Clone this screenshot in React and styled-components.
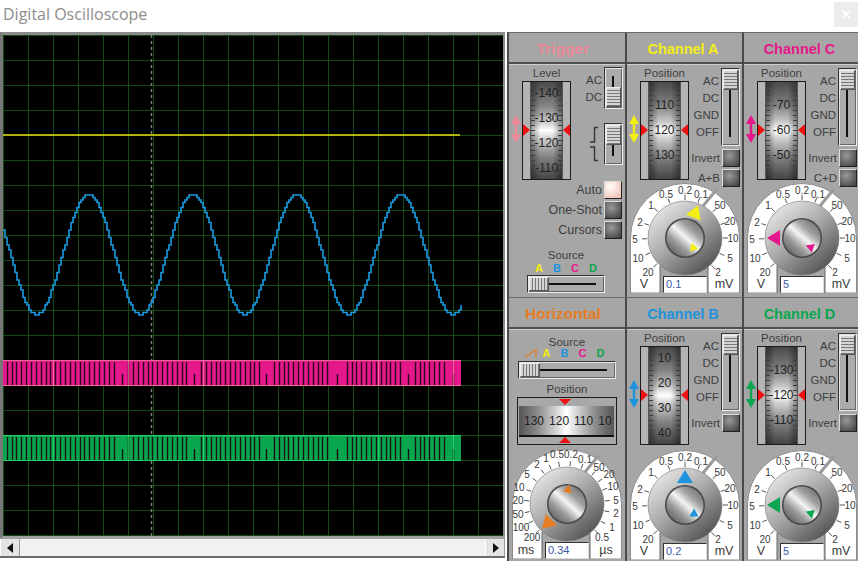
import React from 'react'
import styled, { createGlobalStyle } from 'styled-components'

const GlobalStyle = createGlobalStyle`
  html, body { margin: 0; padding: 0; background: #fff; overflow: hidden; }
  body { font-family: "Liberation Sans", Arial, sans-serif; }
`

const Colors = { A: '#f4ee14', B: '#1c93dc', C: '#e6178a', D: '#0aa650', H: '#e67d22', T: '#ec8a9c' }

const channelScale = [
  ['20', -37, 34], ['10', -47, 20], ['5', -50, 1], ['2', -45, -16], ['1', -34, -33],
  ['0.5', -19, -44], ['0.2', 0, -48], ['0.1', 16, -44], ['50', 35, -33], ['20', 45, -17],
  ['10', 48, 0], ['5', 45, 20], ['2', 33, 34],
]

const timeScale = [
  ['200', -35, 33], ['100', -46, 23], ['50', -49, 10], ['20', -49, -4], ['10', -48, -17],
  ['5', -40, -30], ['2', -30, -40], ['1', -21, -46], ['0.5', -10, -50], ['0.2', 4, -50],
  ['0.1', 18, -45], ['50', 32, -37], ['20', 42, -30], ['10', 46, -18], ['5', 49, -4],
  ['2', 49, 9], ['1', 45, 23], ['0.5', 35, 33],
]

const channels = {
  A: { title: 'Channel A', drum: ['110', '120', '130'], value: '0.1', angle: 22, fine: [8, 9, -20], slider: 0, buttons: ['Invert', 'A+B'] },
  C: { title: 'Channel C', drum: ['-70', '-60', '-50'], value: '5', angle: -90, fine: [8, 9, -70], slider: 0, buttons: ['Invert', 'C+D'] },
  B: { title: 'Channel B', drum: ['10', '20', '30', '40'], value: '0.2', angle: 0, fine: [9, 8, 0], slider: 0, buttons: ['Invert'] },
  D: { title: 'Channel D', drum: ['-130', '-120', '-110'], value: '5', angle: -90, fine: [8, 8, -70], slider: 0, buttons: ['Invert'] },
}

// stepped sine like the sampled trace on the real scope
function sinePath() {
  let d = ''
  let prev = null
  for (let x = 3; x <= 461; x += 2) {
    const raw = 254.5 - 59.5 * Math.cos((2 * Math.PI * (x - 88)) / 104)
    const y = Math.round(raw / 2.5) * 2.5
    if (prev === null) d += `M${x} ${y}`
    else d += `H${x}V${y}`
    prev = y
  }
  return d
}

const notches = [122, 194, 265.5, 337, 408, 453]
const steps = [4.5, 4.5, 5, 4.5, 5.5, 5, 5]

function stripes(top, bottom) {
  let d = ''
  let i = 0
  for (let x = 7; x < 459; x += steps[i++ % steps.length]) {
    const px = Math.round(x) + 0.5
    if (notches.some((n) => Math.abs(n - px) < 6)) continue
    d += `M${px} ${top}V${bottom}`
  }
  notches.forEach((n) => {
    d += `M${Math.round(n) + 0.5} ${top + 12}V${bottom}`
  })
  return d
}

function Band({ y, fill, edge }) {
  return (
    <g>
      <rect x="3" y={y} width="458" height="26" fill={fill} />
      <path d={stripes(y + 2, y + 25)} stroke="#16060e" strokeOpacity="0.9" strokeWidth="1.4" fill="none" />
      <path d={`M3 ${y + 0.5}H461M3 ${y + 25.5}H461M53.5 ${y}V${y + 26}M128.5 ${y}V${y + 26}M203.5 ${y}V${y + 26}M378.5 ${y}V${y + 26}M453.5 ${y}V${y + 26}`} stroke={edge} strokeOpacity="0.7" fill="none" />
    </g>
  )
}

function DualArrow({ color }) {
  return (
    <ArrowIcon viewBox="0 0 10 28">
      <path d="M5 0L10 9H6.2V19H10L5 28L0 19H3.8V9H0Z" fill={color} />
    </ArrowIcon>
  )
}

function Drum({ labels }) {
  return (
    <DrumFrame>
      <DrumFace>
        {labels.map((l) => (
          <DrumLabel key={l}>{l}</DrumLabel>
        ))}
      </DrumFace>
      <RedMark $side="left" />
      <RedMark $side="right" />
    </DrumFrame>
  )
}

function Slider({ vertical, length, at }) {
  return (
    <SliderBox $vertical={vertical} $length={length}>
      <SliderGroove $vertical={vertical} />
      <SliderThumb $vertical={vertical} $end={at} />
    </SliderBox>
  )
}

function ButtonRow({ label, on, large }) {
  return (
    <ButtonLine>
      <SmallLabel $large={large}>{label}</SmallLabel>
      <PushButton $on={on} />
    </ButtonLine>
  )
}

function SourceLetters() {
  return (
    <>
      <Letter $color={Colors.A}>A</Letter>
      <Letter $color={Colors.B}>B</Letter>
      <Letter $color={Colors.C}>C</Letter>
      <Letter $color={Colors.D}>D</Letter>
    </>
  )
}

function Dial({ scale, color, angle, fine, value, left, right }) {
  return (
    <DialBox>
      <svg width="110" height="110" viewBox="0 0 110 110">
        <defs>
          <linearGradient id="knobOuter" x1="0.15" y1="0.1" x2="0.85" y2="0.95">
            <stop offset="0" stopColor="#e4e4e4" />
            <stop offset="0.45" stopColor="#a8a8a8" />
            <stop offset="1" stopColor="#4e4e4e" />
          </linearGradient>
          <linearGradient id="knobInner" x1="0.1" y1="0.95" x2="0.9" y2="0.05">
            <stop offset="0" stopColor="#5a5a5a" />
            <stop offset="0.3" stopColor="#9c9c9c" />
            <stop offset="0.52" stopColor="#f4f4f4" />
            <stop offset="0.72" stopColor="#a2a2a2" />
            <stop offset="1" stopColor="#6c6c6c" />
          </linearGradient>
        </defs>
        <path d="M.5 110V55A54.5 54.5 0 0 1 109.5 55V110Z" fill="#fff" stroke="#8a8a8a" />
        <rect x="30" y="72" width="48" height="38" fill="#a6a6a6" />
        <path d="M30 110V83M78 110V83" stroke="#666" />
        <path d="M73 23L87 6" stroke="#9a9a9a" strokeWidth="3" />
        {scale.map(([text, dx, dy], i) => {
          const r = Math.hypot(dx, dy)
          const ux = dx / r
          const uy = dy / r
          return (
            <g key={i}>
              <line x1={55 + ux * 38} y1={55 + uy * 38} x2={55 + ux * 43} y2={55 + uy * 43} stroke="#555" />
              <text x={55 + dx} y={55 + dy + 3.5} textAnchor="middle" fontSize="10" fill="#3a3a3a">{text}</text>
            </g>
          )
        })}
        <circle cx="55" cy="55" r="37" fill="url(#knobOuter)" stroke="#777" strokeWidth="0.6" />
        <circle cx="55" cy="55" r="20" fill="#4a4a4a" />
        <circle cx="55" cy="55" r="18.5" fill="url(#knobInner)" />
        <path d="M0 -35L8 -22L-8 -22Z" fill={color} transform={`translate(55 55) rotate(${angle})`} />
        <path d="M0 -4.5L4.5 3.5L-4.5 3.5Z" fill={color} transform={`translate(${55 + fine[0]} ${55 + fine[1]}) rotate(${fine[2]})`} />
        <text x="14" y="105" textAnchor="middle" fontSize="12.5" fill="#3a3a3a">{left}</text>
        <text x="94" y="105" textAnchor="middle" fontSize="12.5" fill="#3a3a3a">{right}</text>
      </svg>
      <ValueBox>{value}</ValueBox>
    </DialBox>
  )
}

function ChannelPanel({ id, lower }) {
  const ch = channels[id]
  return (
    <Panel>
      <PanelHeader $color={Colors[id]} $inset={3}>{ch.title}</PanelHeader>
      <PanelBody>
        <TopRow $height={lower ? 120 : 118}>
          <ArrowSlot><DualArrow color={Colors[id]} /></ArrowSlot>
          <DrumColumn>
            <SmallLabel>Position</SmallLabel>
            <Drum labels={ch.drum} />
          </DrumColumn>
          <ControlColumn>
            <CouplingRow>
              <CouplingLabels>
                <SmallLabel>AC</SmallLabel>
                <SmallLabel>DC</SmallLabel>
                <SmallLabel>GND</SmallLabel>
                <SmallLabel>OFF</SmallLabel>
              </CouplingLabels>
              <Slider vertical length={78} at={ch.slider} />
            </CouplingRow>
            <ButtonStack>
              {ch.buttons.map((b) => (
                <ButtonRow key={b} label={b} />
              ))}
            </ButtonStack>
          </ControlColumn>
        </TopRow>
        <Dial scale={channelScale} color={Colors[id]} angle={ch.angle} fine={ch.fine} value={ch.value} left="V" right="mV" />
      </PanelBody>
    </Panel>
  )
}

function TriggerPanel() {
  return (
    <Panel>
      <PanelHeader $color={Colors.T} $inset={8} $size={15.5}>Trigger</PanelHeader>
      <PanelBody>
        <TopRow $height={116}>
          <ArrowSlot><DualArrow color={Colors.T} /></ArrowSlot>
          <DrumColumn>
            <SmallLabel>Level</SmallLabel>
            <Drum labels={['-140', '-130', '-120', '-110']} />
          </DrumColumn>
          <TriggerControls>
            <SwitchRow>
              <CouplingLabels>
                <SmallLabel>AC</SmallLabel>
                <SmallLabel>DC</SmallLabel>
              </CouplingLabels>
              <Slider vertical length={42} at={1} />
            </SwitchRow>
            <SwitchRow>
              <EdgeIcon viewBox="0 0 12 36">
                <path d="M10 1.5H6.5V16H2M2 21H6.5V34.5H10" fill="none" stroke="#333" strokeWidth="1.4" />
              </EdgeIcon>
              <Slider vertical length={42} at={0} />
            </SwitchRow>
          </TriggerControls>
        </TopRow>
        <TriggerButtons>
          <ButtonRow label="Auto" on large />
          <ButtonRow label="One-Shot" large />
          <ButtonRow label="Cursors" large />
        </TriggerButtons>
        <SourceBlock>
          <SmallLabel>Source</SmallLabel>
          <LetterRow><SourceLetters /></LetterRow>
          <Slider length={78} at={0} />
        </SourceBlock>
      </PanelBody>
    </Panel>
  )
}

function HorizontalPanel() {
  return (
    <Panel>
      <PanelHeader $color={Colors.H} $inset={8} $size={15.5}>Horizontal</PanelHeader>
      <HorizontalBody>
        <SmallLabel>Source</SmallLabel>
        <HorizontalLetters>
          <svg width="13" height="10" viewBox="0 0 13 10">
            <path d="M0 9.5L11 1.5V9" fill="none" stroke={Colors.H} strokeWidth="1.2" />
          </svg>
          <SourceLetters />
        </HorizontalLetters>
        <Slider length={98} at={0} />
        <PositionLabel>Position</PositionLabel>
        <WideFrame>
          <WideFace>
            <WideLabel>130</WideLabel>
            <WideLabel>120</WideLabel>
            <WideLabel>110</WideLabel>
            <WideLabel>10</WideLabel>
          </WideFace>
          <RedMark $side="top" />
          <RedMark $side="bottom" />
        </WideFrame>
        <DialRow>
          <Dial scale={timeScale} color={Colors.H} angle={-135} fine={[1, -15, 10]} value="0.34" left="ms" right="µs" />
        </DialRow>
      </HorizontalBody>
    </Panel>
  )
}

export default function App() {
  return (
    <>
      <GlobalStyle />
      <Window>
        <TitleBar>
          <Title>Digital Oscilloscope</Title>
          <CloseButton>×</CloseButton>
        </TitleBar>
        <Main>
          <ScopeColumn>
            <Screen>
              <Traces viewBox="3 35 500 501">
                <path d="M151.5 35V536" stroke="#808080" strokeWidth="1.4" strokeDasharray="3 3" />
                <path d="M3 135H460" stroke="#e4dc10" strokeWidth="1.6" />
                <path d={sinePath()} stroke="#1a9ce0" strokeWidth="1.6" fill="none" />
                <Band y={360} fill="#e4188a" edge="#f08aa0" />
                <Band y={435} fill="#08a64e" edge="#30e070" />
              </Traces>
            </Screen>
            <ScrollBar>
              <ScrollButton>
                <svg width="7" height="10" viewBox="0 0 7 10"><path d="M6 0V10L0 5Z" fill="#111" /></svg>
              </ScrollButton>
              <ScrollTrack />
              <ScrollButton>
                <svg width="7" height="10" viewBox="0 0 7 10"><path d="M1 0V10L7 5Z" fill="#111" /></svg>
              </ScrollButton>
            </ScrollBar>
          </ScopeColumn>
          <PanelGrid>
            <TriggerPanel />
            <ChannelPanel id="A" />
            <ChannelPanel id="C" />
            <HorizontalPanel />
            <ChannelPanel id="B" lower />
            <ChannelPanel id="D" lower />
          </PanelGrid>
        </Main>
      </Window>
    </>
  )
}

const Window = styled.div`
  width: 858px;
  height: 561px;
  display: flex;
  flex-direction: column;
  background: #fff;
  overflow: hidden;
`

const TitleBar = styled.div`
  height: 32px;
  flex: none;
  display: flex;
  align-items: flex-start;
  justify-content: space-between;
`

const Title = styled.div`
  font-family: "Open Sans", "Noto Sans", sans-serif;
  font-size: 16px;
  line-height: 29px;
  padding-left: 3px;
  color: #8d8d8d;
`

const CloseButton = styled.div`
  width: 24px;
  height: 25px;
  margin-top: 2px;
  background: #ececec;
  color: #fff;
  font-size: 20px;
  line-height: 25px;
  text-align: center;
`

const Main = styled.div`
  flex: 1;
  display: flex;
  min-height: 0;
`

const ScopeColumn = styled.div`
  width: 507px;
  flex: none;
  display: flex;
  flex-direction: column;
  box-sizing: border-box;
  padding-right: 2px;
`

const Screen = styled.div`
  position: relative;
  width: 500px;
  height: 501px;
  border-top: 3px solid #8a8a8a;
  border-left: 3px solid #777;
  border-right: 2px solid #8c8c8c;
  border-bottom: 3px solid #a0a0a0;
  background-color: #000;
  background-image:
    linear-gradient(to right, transparent 24px, #124a12 24px),
    linear-gradient(to bottom, transparent 24px, #124a12 24px);
  background-size: 25px 25px;
  background-position: 1px 1px;
`

const Traces = styled.svg`
  position: absolute;
  inset: 0;
  width: 500px;
  height: 501px;
`

const ScrollBar = styled.div`
  height: 17px;
  display: flex;
  background: #eee;
  border-bottom: 2px solid #6c6c6c;
`

const ScrollButton = styled.div`
  width: 20px;
  flex: none;
  display: flex;
  align-items: center;
  justify-content: center;
  background: #e4e4e4;
  border-left: 1px solid #fff;
  border-right: 1px solid #999;
  box-sizing: border-box;
`

const ScrollTrack = styled.div`
  flex: 1;
  background: #f1f1f1;
`

const PanelGrid = styled.div`
  flex: 1;
  display: grid;
  grid-template-columns: 118px 117px 116px;
  grid-template-rows: 265px 264px;
  background: #a6a6a6;
`

const Panel = styled.div`
  display: flex;
  flex-direction: column;
  border-left: 2px solid #4a4a4a;
  border-top: 1px solid #6a6a6a;
  min-width: 0;
`

const PanelHeader = styled.div`
  height: 31px;
  flex: none;
  display: flex;
  align-items: center;
  justify-content: center;
  box-sizing: border-box;
  padding: 2px ${(p) => p.$inset}px 0 0;
  border-bottom: 2px solid #4e4e4e;
  font-size: ${(p) => p.$size || 14.5}px;
  font-weight: bold;
  color: ${(p) => p.$color};
`

const PanelBody = styled.div`
  flex: 1;
  display: flex;
  flex-direction: column;
  position: relative;
  border-top: 1px solid #cfcfcf;
`

const HorizontalBody = styled(PanelBody)`
  align-items: center;
  padding-top: 5px;
`

const TopRow = styled.div`
  height: ${(p) => p.$height}px;
  flex: none;
  display: flex;
`

const ArrowSlot = styled.div`
  width: 13px;
  flex: none;
  padding-left: 2px;
  box-sizing: border-box;
  padding-top: 50px;
`

const ArrowIcon = styled.svg`
  display: block;
  width: 10px;
  height: 28px;
`

const DrumColumn = styled.div`
  width: 49px;
  flex: none;
  display: flex;
  flex-direction: column;
  align-items: center;
  padding-top: 1px;
`

const SmallLabel = styled.div`
  font-size: ${(p) => (p.$large ? 12.5 : 11.5)}px;
  line-height: 14px;
  color: #3e3e3e;
  white-space: nowrap;
`

const PositionLabel = styled(SmallLabel)`
  margin-top: 3px;
`

const DrumFrame = styled.div`
  position: relative;
  width: 49px;
  height: 99px;
  margin-top: 1px;
  flex: none;
  box-sizing: border-box;
  border: 1.5px solid #1c1c1c;
  background: #b4b4b4;
  display: flex;
  justify-content: center;
`

const DrumFace = styled.div`
  position: relative;
  width: 31px;
  display: flex;
  flex-direction: column;
  justify-content: center;
  align-items: center;
  background:
    linear-gradient(to right, rgba(0, 0, 0, 0.38), transparent 30%, transparent 70%, rgba(0, 0, 0, 0.38)),
    linear-gradient(to bottom, #4a4a4a 0%, #858585 25%, #c4c4c4 40%, #fff 50%, #d0d0d0 58%, #808080 78%, #454545 100%);
  border-left: 1px solid #555;
  border-right: 1px solid #555;

  &::before, &::after {
    content: '';
    position: absolute;
    top: 3px;
    bottom: 3px;
    width: 4px;
    background: repeating-linear-gradient(to bottom, #3c3c3c 0 1px, transparent 1px 5px);
  }
  &::before { left: 0; }
  &::after { right: 0; }
`

const DrumLabel = styled.div`
  font-size: 12px;
  line-height: 25px;
  color: #222;
`

const RedMark = styled.div`
  position: absolute;
  width: 0;
  height: 0;
  ${(p) => p.$side === 'left' && 'left: 0; top: 42px; border-left: 7px solid #ee1111; border-top: 6px solid transparent; border-bottom: 6px solid transparent;'}
  ${(p) => p.$side === 'right' && 'right: 0; top: 42px; border-right: 7px solid #ee1111; border-top: 6px solid transparent; border-bottom: 6px solid transparent;'}
  ${(p) => p.$side === 'top' && 'left: 41px; top: 1px; border-top: 6px solid #ee1111; border-left: 6px solid transparent; border-right: 6px solid transparent;'}
  ${(p) => p.$side === 'bottom' && 'left: 41px; bottom: 1px; border-bottom: 6px solid #ee1111; border-left: 6px solid transparent; border-right: 6px solid transparent;'}
`

const ControlColumn = styled.div`
  width: 51px;
  flex: none;
  padding: 3px 0 0 0;
  display: flex;
  flex-direction: column;
  align-items: flex-end;
  position: relative;
  z-index: 1;
`

const CouplingRow = styled.div`
  display: flex;
  justify-content: flex-end;
  gap: 2px;
`

const CouplingLabels = styled.div`
  display: flex;
  flex-direction: column;
  align-items: flex-end;
  gap: 3px;
  padding-top: 6px;
`

const SliderBox = styled.div`
  position: relative;
  flex: none;
  box-sizing: border-box;
  width: ${(p) => (p.$vertical ? '19px' : `${p.$length}px`)};
  height: ${(p) => (p.$vertical ? `${p.$length}px` : '18px')};
  background: #ababab;
  border: 1px solid;
  border-color: #333 #eee #eee #333;
  box-shadow: inset 1px 1px 0 #e4e4e4, inset -1px -1px 0 #666;
`

const SliderGroove = styled.div`
  position: absolute;
  background: #111;
  ${(p) => (p.$vertical
    ? 'left: 7px; width: 2px; top: 8px; bottom: 8px;'
    : 'top: 7px; height: 2px; left: 8px; right: 8px;')}
`

const SliderThumb = styled.div`
  position: absolute;
  box-sizing: border-box;
  border: 1px solid #555;
  border-top-color: #eee;
  border-left-color: #eee;
  ${(p) => (p.$vertical
    ? `left: 1px; right: 1px; height: 20px; ${p.$end ? 'bottom: 1px;' : 'top: 1px;'}
       background: repeating-linear-gradient(to bottom, #d4d4d4 0 2px, #777 2px 3px);`
    : `top: 1px; bottom: 1px; width: 20px; ${p.$end ? 'right: 1px;' : 'left: 1px;'}
       background: repeating-linear-gradient(to right, #d4d4d4 0 2px, #777 2px 3px);`)}
`

const ButtonStack = styled.div`
  display: flex;
  flex-direction: column;
  align-items: flex-end;
  gap: 2px;
  margin-top: 3px;
`

const ButtonLine = styled.div`
  display: flex;
  align-items: center;
  justify-content: flex-end;
  gap: 2px;
`

const PushButton = styled.div`
  width: 18px;
  height: 18px;
  flex: none;
  box-sizing: border-box;
  border: 1px solid;
  border-color: #ddd #222 #222 #ddd;
  background: ${(p) => (p.$on
    ? 'radial-gradient(circle at 35% 30%, #fff 0, #fbe9e4 30%, #f0c0b4 85%)'
    : 'radial-gradient(circle at 40% 35%, #9a9a9a 0, #6e6e6e 45%, #3a3a3a 100%)')};
`

const TriggerControls = styled.div`
  width: 52px;
  flex: none;
  padding-top: 2px;
  display: flex;
  flex-direction: column;
  align-items: flex-end;
  gap: 14px;
`

const SwitchRow = styled.div`
  display: flex;
  justify-content: flex-end;
  gap: 2px;
`

const EdgeIcon = styled.svg`
  width: 12px;
  height: 36px;
  margin: 3px 2px 0 0;
`

const TriggerButtons = styled.div`
  display: flex;
  flex-direction: column;
  align-items: flex-end;
  gap: 2px;
  padding-right: 3px;
`

const SourceBlock = styled.div`
  display: flex;
  flex-direction: column;
  align-items: center;
  margin-top: 9px;
  padding-right: 2px;
`

const LetterRow = styled.div`
  display: flex;
  justify-content: center;
  width: 72px;
  line-height: 13px;
`

const HorizontalLetters = styled.div`
  display: flex;
  align-items: center;
  justify-content: center;
  height: 12px;
  width: 96px;
  margin: -2px 0 2px;
`

const Letter = styled.span`
  width: 18px;
  text-align: center;
  font-size: 11px;
  font-weight: bold;
  color: ${(p) => p.$color};
`

const WideFrame = styled.div`
  position: relative;
  width: 100px;
  height: 48px;
  margin-top: 1px;
  flex: none;
  box-sizing: border-box;
  border: 1.5px solid #1c1c1c;
  background: #a8a8a8;
  padding: 8px 2px 7px 1px;
`

const WideFace = styled.div`
  height: 31px;
  display: flex;
  align-items: center;
  overflow: hidden;
  background: linear-gradient(to right, #555 0%, #8c8c8c 20%, #d0d0d0 38%, #fff 50%, #d0d0d0 62%, #8c8c8c 80%, #555 100%);
  border-bottom: 2px solid #111;
  padding-left: 5px;
  box-sizing: border-box;
  gap: 5px;
`

const WideLabel = styled.div`
  font-size: 12px;
  color: #222;
`

const DialRow = styled.div`
  width: 100%;
  margin-top: 4px;
`

const DialBox = styled.div`
  position: relative;
  width: 110px;
  height: 110px;
  margin-left: 3px;
  flex: none;

  svg {
    display: block;
    font-family: "Liberation Sans", Arial, sans-serif;
  }
`

const ValueBox = styled.div`
  position: absolute;
  left: 33px;
  top: 93px;
  width: 44px;
  height: 17px;
  box-sizing: border-box;
  background: #fff;
  border: 1px solid;
  border-color: #333 #ddd #ddd #333;
  padding-left: 2px;
  font-size: 11px;
  line-height: 15px;
  color: #3a5aa8;
`
